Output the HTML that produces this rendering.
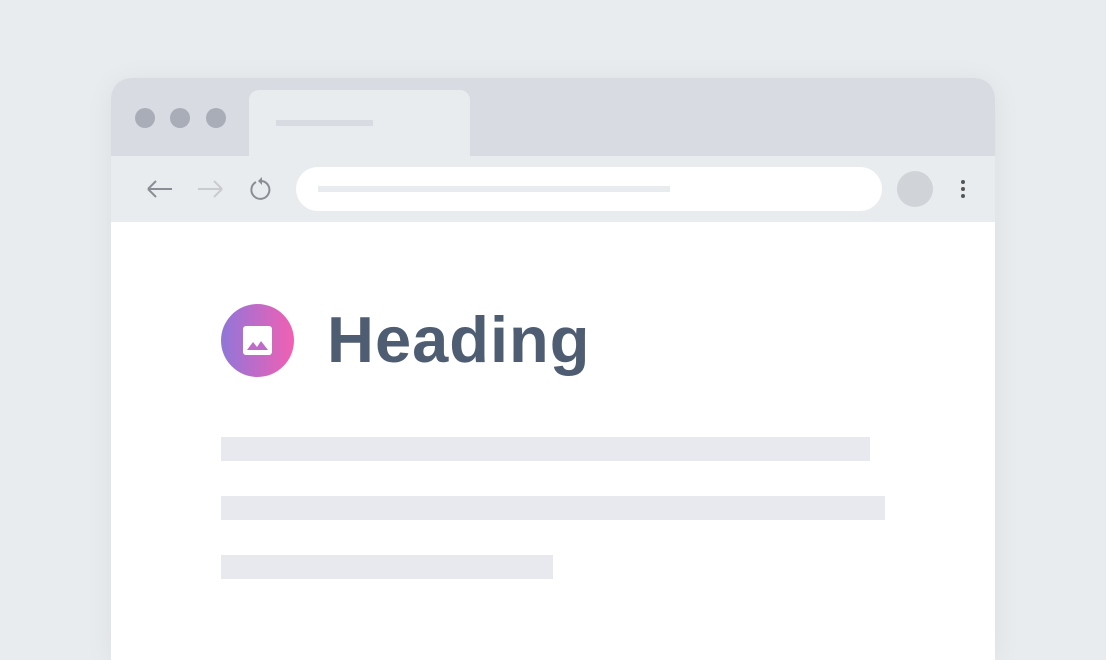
<!DOCTYPE html>
<html><head><style>
html,body{margin:0;width:1106px;height:660px;overflow:hidden}
body{background:#e9ecef;position:relative;font-family:"Liberation Sans",sans-serif}
.win{position:absolute;left:111px;top:78px;width:884px;height:582px;border-radius:20px 20px 0 0;background:#fff;overflow:hidden;box-shadow:0 4px 30px rgba(0,0,0,.06)}
.tabs{position:absolute;left:0;top:0;width:884px;height:78px;background:#d8dbe2}
.dot{position:absolute;top:30px;width:20px;height:20px;border-radius:50%;background:#a9adb8}
.tab{position:absolute;left:138px;top:12px;width:221px;height:66px;background:#e9ecef;border-radius:10px 10px 0 0}
.tbar{position:absolute;left:0;top:78px;width:884px;height:66px;background:#e9ecef}
.url{position:absolute;left:185px;top:11px;width:586px;height:44px;border-radius:22px;background:#fff}
.bar{position:absolute;background:#e8e9ee}
</style></head><body>
<div class="win">
 <div class="tabs">
  <div class="dot" style="left:24px"></div><div class="dot" style="left:59px"></div><div class="dot" style="left:95px"></div>
  <div class="tab"><div style="position:absolute;left:27px;top:30px;width:97px;height:6px;background:#d8dbe2"></div></div>
 </div>
 <div class="tbar">
  <svg style="position:absolute;left:34px;top:22px" width="30" height="22" viewBox="0 0 30 22"><path d="M3 11H27M3 11L11 3M3 11L11 19" stroke="#8a8d93" stroke-width="2" fill="none"/></svg>
  <svg style="position:absolute;left:84px;top:22px" width="30" height="22" viewBox="0 0 30 22"><path d="M3 11H27M27 11L19 3M27 11L19 19" stroke="#c9cbcf" stroke-width="2" fill="none"/></svg>
  <svg style="position:absolute;left:137px;top:20px" width="24" height="26" viewBox="0 0 24 26"><path d="M8 6A9 9 0 1 0 14 5" stroke="#8a8d93" stroke-width="2" fill="none"/><path d="M14 1L10 5L14 9Z" fill="#8a8d93"/></svg>
  <div class="url"><div style="position:absolute;left:22px;top:19px;width:352px;height:6px;background:#e9ecef"></div></div>
  <div style="position:absolute;left:786px;top:15px;width:36px;height:36px;border-radius:50%;background:#d0d3d7"></div>
  <div style="position:absolute;left:850px;top:24px;width:4px;height:4px;border-radius:2px;background:#555;box-shadow:0 7px 0 #555,0 14px 0 #555"></div>
 </div>
 <div style="position:absolute;left:110px;top:226px;width:73px;height:73px;border-radius:50%;background:linear-gradient(90deg,#9076d9,#f160b3)">
  <svg style="position:absolute;left:22px;top:22px" width="29" height="29" viewBox="0 0 29 29"><rect width="29" height="29" rx="3" fill="#fff"/><path d="M4 24L10 16L14 21L18 15L25 24Z" fill="#c06bc9"/></svg>
 </div>
 <div style="position:absolute;left:216px;top:222px;font-size:65px;font-weight:bold;color:#4f5d73;letter-spacing:1px;line-height:80px">Heading</div>
 <div class="bar" style="left:110px;top:359px;width:649px;height:24px"></div>
 <div class="bar" style="left:110px;top:418px;width:664px;height:24px"></div>
 <div class="bar" style="left:110px;top:477px;width:332px;height:24px"></div>
</div>
</body></html>
